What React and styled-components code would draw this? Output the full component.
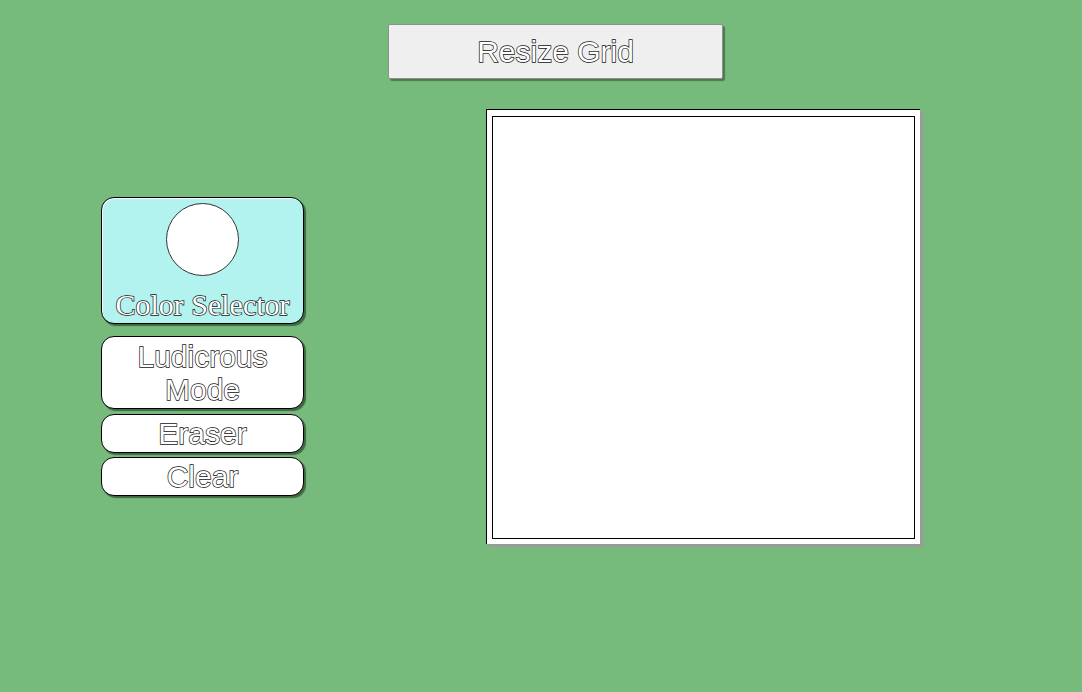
import styled, { createGlobalStyle } from "styled-components"

const GlobalStyle = createGlobalStyle`
  html, body {
    margin: 0;
    padding: 0;
    background: #76bb7c;
  }
  body {
    font-family: "Liberation Sans", Arial, sans-serif;
  }
`

const Page = styled.div`
  width: 1082px;
  height: 692px;
  padding-top: 24px;
  box-sizing: border-box;
  background: #76bb7c;
`

const Toolbar = styled.div`
  display: flex;
  padding-left: 388px;
`

// white letters with a thin dark outline
const outlined = `
  color: #fff;
  -webkit-text-stroke: 1.4px #111;
  paint-order: stroke fill;
`

const ResizeButton = styled.button`
  width: 335px;
  height: 55px;
  padding: 0;
  background: #efefef;
  border: 1px solid #8f8f8f;
  border-radius: 2px;
  box-shadow: 2px 2px 1px rgba(0, 0, 0, 0.35);
  font-family: "Liberation Sans", Arial, sans-serif;
  font-size: 30px;
  ${outlined}
`

const Workspace = styled.div`
  display: flex;
  align-items: flex-start;
  margin-top: 30px;
  padding-left: 101px;
`

const Sidebar = styled.div`
  display: flex;
  flex-direction: column;
  width: 203px;
  margin-top: 88px;
`

const ToolButton = styled.button`
  display: flex;
  flex-direction: column;
  align-items: center;
  justify-content: center;
  width: 203px;
  height: ${p => p.$h}px;
  margin-bottom: ${p => p.$gap || 0}px;
  padding: 0;
  background: ${p => p.$bg || "#fff"};
  border: 1px solid #000;
  border-radius: 13px;
  box-shadow: inset 1px 1px 0 #fff, 2px 2px 1px rgba(0, 0, 0, 0.45);
  font-family: ${p => p.$serif ? '"Liberation Serif", "Times New Roman", serif' : '"Liberation Sans", Arial, sans-serif'};
  font-size: 30px;
  line-height: 33px;
  ${outlined}
`

const Swatch = styled.div`
  width: 71px;
  height: 71px;
  border-radius: 50%;
  background: #fff;
  border: 1px solid #333;
  margin-top: 2px;
  margin-bottom: 12px;
`

const CanvasFrame = styled.div`
  margin-left: 182px;
  background: #fff;
  border-top: 1px solid #000;
  border-left: 1px solid #000;
  padding: 6px 5px 5px 5px;
  box-shadow: 3px 3px 0 #9a9a9a;
`

const Grid = styled.div`
  width: 421px;
  height: 421px;
  border: 1px solid #000;
  background: #fff;
`

export default function App() {
  return (
    <>
      <GlobalStyle />
      <Page>
        <Toolbar>
          <ResizeButton>Resize Grid</ResizeButton>
        </Toolbar>
        <Workspace>
          <Sidebar>
            <ToolButton $h={127} $gap={12} $bg="#b2f3ef" $serif>
              <Swatch />
              Color Selector
            </ToolButton>
            <ToolButton $h={73} $gap={5}>Ludicrous<br />Mode</ToolButton>
            <ToolButton $h={39} $gap={4}>Eraser</ToolButton>
            <ToolButton $h={39}>Clear</ToolButton>
          </Sidebar>
          <CanvasFrame>
            <Grid />
          </CanvasFrame>
        </Workspace>
      </Page>
    </>
  )
}
